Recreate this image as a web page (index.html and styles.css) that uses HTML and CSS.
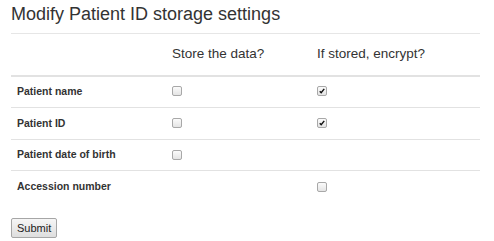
FILE: index.html
```html
<!DOCTYPE html>
<html lang="en">
<head>
    <meta charset="UTF-8">
    <meta name="viewport" content="width=device-width, initial-scale=1.0">
    <title>Patient ID storage settings</title>
    <link rel="stylesheet" href="styles.css">
</head>
<body>
    <div class="container">
        <h3 class="page-header">Modify Patient ID storage settings</h3>

        <form>
            <table class="settings">
                <thead>
                    <tr>
                        <th class="col-field"></th>
                        <th class="col-store"><h4>Store the data?</h4></th>
                        <th><h4>If stored, encrypt?</h4></th>
                    </tr>
                </thead>
                <tbody>
                    <tr>
                        <th>Patient name</th>
                        <td><span class="box"></span></td>
                        <td><span class="box checked"><svg viewBox="0 0 10 10"><path d="M2.2 5.3 L4 7.2 L7.8 2.4" /></svg></span></td>
                    </tr>
                    <tr>
                        <th>Patient ID</th>
                        <td><span class="box"></span></td>
                        <td><span class="box checked"><svg viewBox="0 0 10 10"><path d="M2.2 5.3 L4 7.2 L7.8 2.4" /></svg></span></td>
                    </tr>
                    <tr>
                        <th>Patient date of birth</th>
                        <td><span class="box"></span></td>
                        <td></td>
                    </tr>
                    <tr>
                        <th>Accession number</th>
                        <td></td>
                        <td><span class="box"></span></td>
                    </tr>
                </tbody>
            </table>

            <button type="submit" class="btn">Submit</button>
        </form>
    </div>
</body>
</html>
```

FILE: styles.css
```css
* {
    box-sizing: border-box;
}

body {
    margin: 0;
    font-family: "Liberation Sans", Arial, sans-serif;
    font-size: 10.5px;
    line-height: 1.43;
    color: #333;
    background-color: #fff;
}

.container {
    padding: 0 14px 0 11px;
}

.page-header {
    margin: 5px 0 0;
    padding-bottom: 8px;
    font-size: 18px;
    font-weight: normal;
    line-height: 1.1;
    border-bottom: 1px solid #e6e6e6;
}

.settings {
    width: 100%;
    border-collapse: collapse;
    margin-bottom: 16px;
}

.settings th,
.settings td {
    padding: 6px;
    text-align: left;
    vertical-align: middle;
}

.settings thead th {
    border-bottom: 2px solid #e2e2e2;
    font-weight: normal;
}

.settings h4 {
    margin: 7px 0;
    font-size: 13.5px;
    font-weight: normal;
    line-height: 1.1;
}

.col-field {
    width: 155px;
}

.col-store {
    width: 145px;
}

.settings tbody tr {
    height: 31.7px;
}

.settings tbody tr + tr th,
.settings tbody tr + tr td {
    border-top: 1px solid #e2e2e2;
}

.settings tbody th {
    font-weight: bold;
}

.box {
    display: inline-block;
    width: 10px;
    height: 10px;
    margin-top: -2px;
    border: 1px solid #a8a8a8;
    border-radius: 2px;
    background: linear-gradient(#fbfbfb, #e4e4e4);
    vertical-align: middle;
}

.box svg {
    display: block;
    width: 8px;
    height: 8px;
}

.box path {
    fill: none;
    stroke: #111;
    stroke-width: 1.8;
}

.btn {
    display: block;
    height: 20px;
    padding: 0 5px;
    font-family: "Liberation Sans", Arial, sans-serif;
    font-size: 11px;
    color: #222;
    background: linear-gradient(#f6f6f6, #dedede);
    border: 1px solid #a6a6a6;
    border-radius: 2px;
}
```
